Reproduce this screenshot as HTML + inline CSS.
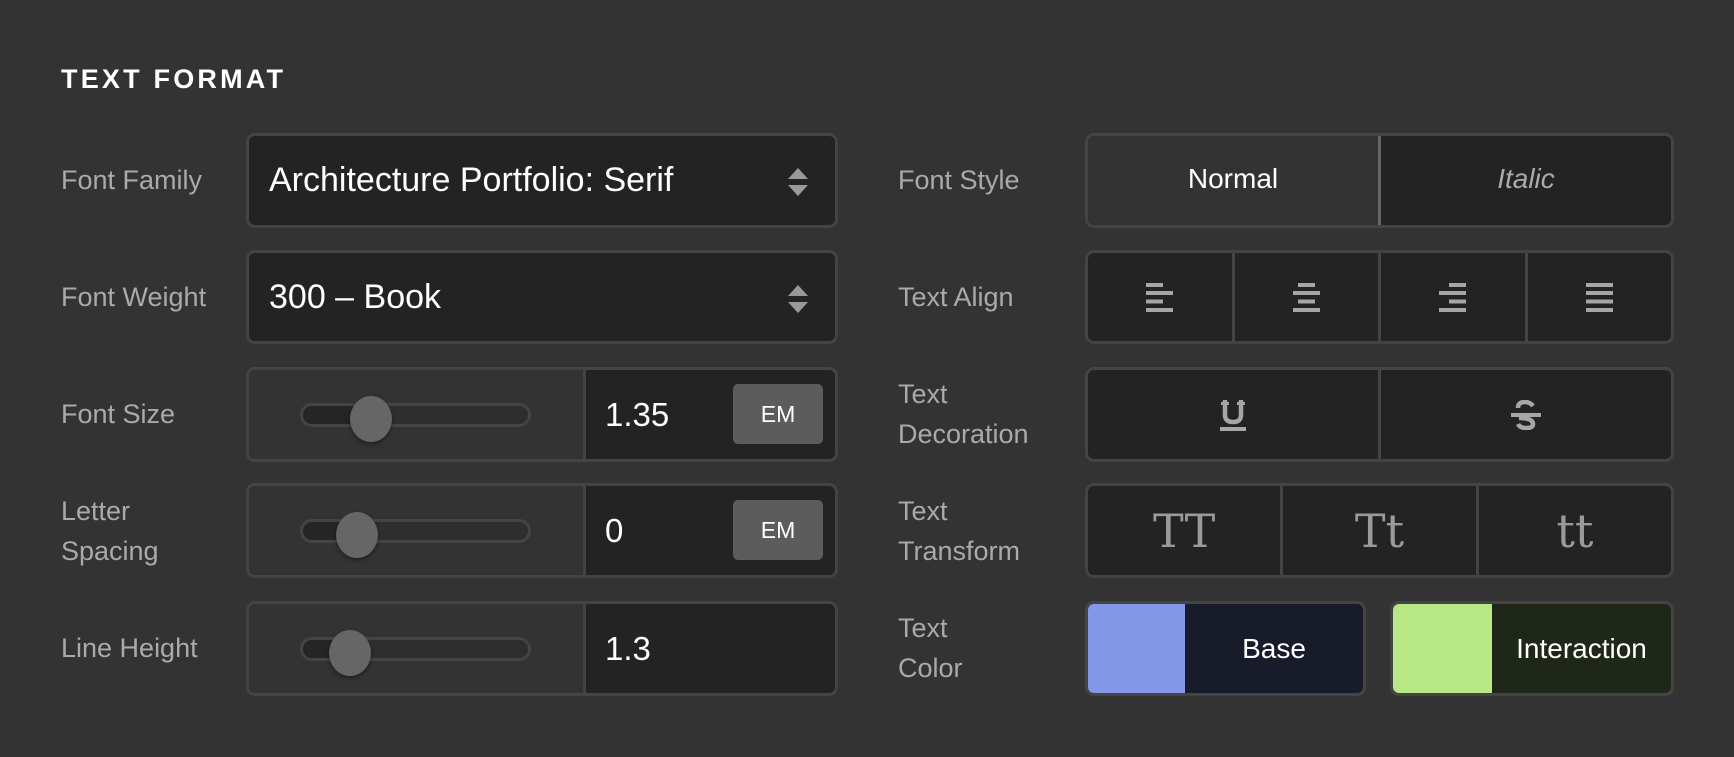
<!DOCTYPE html>
<html><head><meta charset="utf-8"><style>
*{box-sizing:border-box;margin:0;padding:0}
body{width:1734px;height:757px;background:#333;font-family:"Liberation Sans",sans-serif;position:relative;overflow:hidden}
.a{position:absolute}
.t{left:61px;top:64px;color:#fff;font-weight:bold;font-size:27px;letter-spacing:3.2px}
.lbl{color:#aaa;font-size:27px;line-height:40px}
.box{border:3px solid #444;border-radius:9px;background:#232323;overflow:hidden;display:flex}
.sel{color:#fff;font-size:34px;align-items:center;padding-left:20px}
.arr{position:absolute;right:26px;top:31px}
.sl{width:337px;background:#333;border-right:3px solid #444;position:relative}
.trk{position:absolute;left:51px;top:33px;width:231px;height:24px;border:3px solid #444;border-radius:12px;background:#2e2e2e}
.th{position:absolute;top:26px;width:42px;height:46px;border-radius:50%;background:#666;box-shadow:0 2px 4px rgba(0,0,0,.4)}
.num{flex:1;color:#fff;font-size:33px;display:flex;align-items:center;padding-left:19px;position:relative}
.em{position:absolute;right:12px;top:14px;width:90px;height:60px;background:#5c5c5c;border-radius:5px;color:#fff;font-size:23px;display:flex;align-items:center;justify-content:center}
.c{flex:1;display:flex;align-items:center;justify-content:center;border-left:3px solid #444;color:#aaa}
.c:first-child{border-left:none}
</style></head><body>
<div class="a t">TEXT FORMAT</div>

<div class="a lbl" style="left:61px;top:160px">Font Family</div>
<div class="a box sel" style="left:246px;top:133px;width:592px;height:95px">Architecture Portfolio: Serif<svg class="arr" width="22" height="30" viewBox="0 0 22 30"><path d="M11 1L21 12H1Z M11 29L21 18H1Z" fill="#999"/></svg></div>

<div class="a lbl" style="left:61px;top:277px">Font Weight</div>
<div class="a box sel" style="left:246px;top:250px;width:592px;height:94px">300 – Book<svg class="arr" width="22" height="30" viewBox="0 0 22 30"><path d="M11 1L21 12H1Z M11 29L21 18H1Z" fill="#999"/></svg></div>

<div class="a lbl" style="left:61px;top:394px">Font Size</div>
<div class="a box" style="left:246px;top:367px;width:592px;height:95px"><div class="sl"><div class="trk"><div style="position:absolute;left:0;top:0;width:60px;height:18px;background:#252525;border-radius:9px"></div></div><div class="th" style="left:101px"></div></div><div class="num">1.35<div class="em">EM</div></div></div>

<div class="a lbl" style="left:61px;top:491px;line-height:40px">Letter<br>Spacing</div>
<div class="a box" style="left:246px;top:483px;width:592px;height:95px"><div class="sl"><div class="trk"><div style="position:absolute;left:0;top:0;width:46px;height:18px;background:#252525;border-radius:9px"></div></div><div class="th" style="left:87px"></div></div><div class="num">0<div class="em">EM</div></div></div>

<div class="a lbl" style="left:61px;top:628px">Line Height</div>
<div class="a box" style="left:246px;top:601px;width:592px;height:95px"><div class="sl"><div class="trk"><div style="position:absolute;left:0;top:0;width:40px;height:18px;background:#252525;border-radius:9px"></div></div><div class="th" style="left:80px"></div></div><div class="num">1.3</div></div>

<div class="a lbl" style="left:898px;top:160px">Font Style</div>
<div class="a box" style="left:1085px;top:133px;width:589px;height:95px;font-size:28px">
<div class="c" style="background:#333;color:#fff;border:3px solid #666;border-radius:8px 0 0 8px;margin:-3px 0 -3px -3px;padding-bottom:4px">Normal</div>
<div class="c" style="font-style:italic;border-left:none;padding-bottom:4px">Italic</div></div>

<div class="a lbl" style="left:898px;top:277px">Text Align</div>
<div class="a box" style="left:1085px;top:250px;width:589px;height:94px">
<div class="c"><svg width="27" height="29"><rect x="0" y="0" width="17" height="4" fill="#a6a6a6"/><rect x="0" y="8" width="27" height="4" fill="#a6a6a6"/><rect x="0" y="16.5" width="17" height="4" fill="#a6a6a6"/><rect x="0" y="25" width="27" height="4" fill="#a6a6a6"/></svg></div>
<div class="c"><svg width="27" height="29"><rect x="5" y="0" width="17" height="4" fill="#a6a6a6"/><rect x="0" y="8" width="27" height="4" fill="#a6a6a6"/><rect x="5" y="16.5" width="17" height="4" fill="#a6a6a6"/><rect x="0" y="25" width="27" height="4" fill="#a6a6a6"/></svg></div>
<div class="c"><svg width="27" height="29"><rect x="10" y="0" width="17" height="4" fill="#a6a6a6"/><rect x="0" y="8" width="27" height="4" fill="#a6a6a6"/><rect x="10" y="16.5" width="17" height="4" fill="#a6a6a6"/><rect x="0" y="25" width="27" height="4" fill="#a6a6a6"/></svg></div>
<div class="c"><svg width="27" height="29"><rect x="0" y="0" width="27" height="4" fill="#a6a6a6"/><rect x="0" y="8" width="27" height="4" fill="#a6a6a6"/><rect x="0" y="16.5" width="27" height="4" fill="#a6a6a6"/><rect x="0" y="25" width="27" height="4" fill="#a6a6a6"/></svg></div></div>

<div class="a lbl" style="left:898px;top:374px">Text<br>Decoration</div>
<div class="a box" style="left:1085px;top:367px;width:589px;height:95px">
<div class="c"><svg width="28" height="34"><path d="M6 2V17Q6 24 14 24Q22 24 22 17V2" fill="none" stroke="#a6a6a6" stroke-width="4.5"/><rect x="2" y="4" width="8" height="3" fill="#a6a6a6"/><rect x="18" y="4" width="8" height="3" fill="#a6a6a6"/><rect x="1" y="29" width="26" height="4" fill="#a6a6a6"/></svg></div>
<div class="c"><svg width="30" height="30"><path d="M22 6Q19 2 14 2Q7 2 7 8M8 18Q22 18 22 24Q22 28 15 28Q9 28 7 24" fill="none" stroke="#a6a6a6" stroke-width="4.5"/><rect x="0" y="13" width="30" height="4" fill="#a6a6a6"/></svg></div></div>

<div class="a lbl" style="left:898px;top:491px">Text<br>Transform</div>
<div class="a box" style="left:1085px;top:483px;width:589px;height:95px;font-family:'DejaVu Serif','Liberation Serif',serif;font-size:46px">
<div class="c" style="color:#9a9a9a">TT</div><div class="c" style="color:#9a9a9a">Tt</div><div class="c" style="color:#9a9a9a">tt</div></div>

<div class="a lbl" style="left:898px;top:608px">Text<br>Color</div>
<div class="a box" style="left:1085px;top:601px;width:281px;height:95px;background:#181c2a;color:#fff;font-size:28px"><div style="width:97px;background:#8598e8"></div><div style="flex:1;display:flex;align-items:center;justify-content:center">Base</div></div>
<div class="a box" style="left:1390px;top:601px;width:284px;height:95px;background:#1f2818;color:#fff;font-size:28px"><div style="width:99px;background:#b8e886"></div><div style="flex:1;display:flex;align-items:center;justify-content:center">Interaction</div></div>
</body></html>
